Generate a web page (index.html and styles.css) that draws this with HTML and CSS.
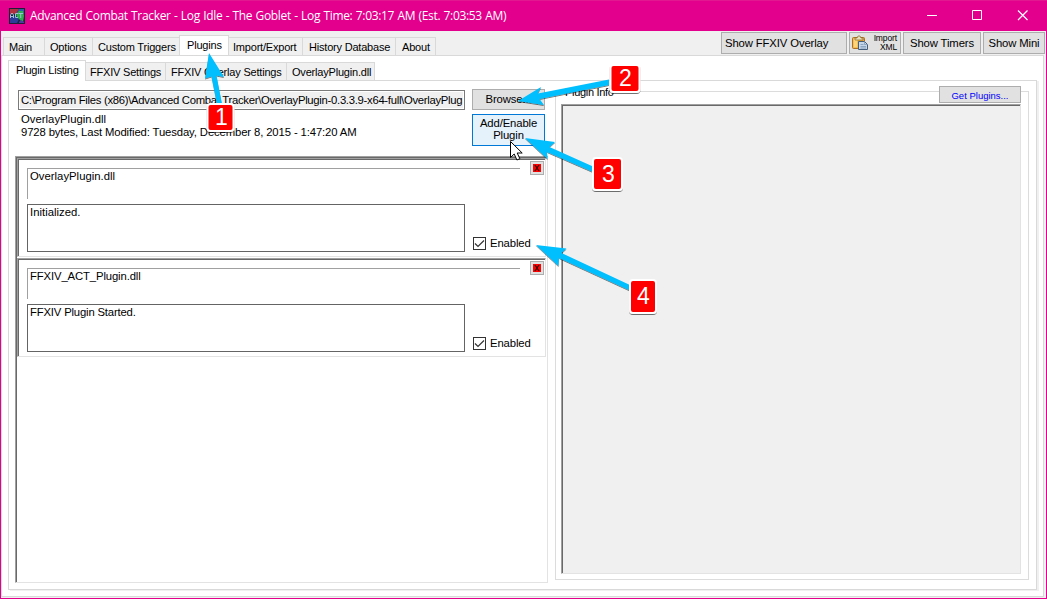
FILE: index.html
```html
<!DOCTYPE html>
<html lang="en">
<head>
<meta charset="utf-8">
<title>Advanced Combat Tracker</title>
<link rel="stylesheet" href="styles.css">
</head>
<body>
<div class="window">
  <header class="titlebar">
    <svg class="app-icon" width="16" height="16" viewBox="0 0 16 16">
      <rect width="16" height="16" fill="#17263f"/>
      <path d="M1 1h9L7 6H1z" fill="#b03040"/><path d="M10 1h5v5l-5 1-3-1z" fill="#2b5fa0"/>
      <path d="M1 9l6-1 3 3-2 4H1z" fill="#2c3c99"/><path d="M7 7l3-4h4l1 5-1 6-2-1-3-3z" fill="#2fae4c"/>
      <path d="M10 14l2-2 3 2v1h-5z" fill="#4a3da0"/>
      <path d="M1.500 10V7l1.500-2 1.500 2v3M2 8.500h2.500M9 5.500H6.500v4H9M9.500 5.500H14M11.700 5.500v4.500" fill="none" stroke="#9cc0d5"/>
      <rect x=".5" y=".5" width="15" height="15" fill="none" stroke="#1b2038"/>
    </svg>
    <h1 class="title">Advanced Combat Tracker - Log Idle - The Goblet - Log Time: 7:03:17 AM (Est. 7:03:53 AM)</h1>
    <svg class="controls" width="104" height="12" viewBox="0 0 104 12" fill="none" stroke="#fff">
      <path d="M0 5.500h10M45.500 .5h9v9h-9z"/><path d="M91 .5l9.500 9.500M100.500 .5L91 10" stroke-width="1.200"/>
    </svg>
  </header>

  <div class="toolbar">
    <nav class="tabs main-tabs">
      <span class="tab t-main">Main</span><span class="tab t-options">Options</span><span class="tab t-triggers">Custom Triggers</span><span class="tab t-plugins active">Plugins</span><span class="tab t-import">Import/Export</span><span class="tab t-history">History Database</span><span class="tab t-about">About</span>
    </nav>
    <div class="actions">
      <button class="btn a-overlay">Show FFXIV Overlay</button>
      <button class="btn a-import">
        <svg width="17" height="16" viewBox="0 0 17 16">
          <rect x=".5" y="2.500" width="12" height="11" rx="1" fill="#e9a83d" stroke="#ad6f22"/>
          <path d="M1.500 3.500h4v9h-4z" fill="#ffd57b"/><path d="M3 3h2l1-2h2l1 2h2v2H3z" fill="#e8dfbd" stroke="#876428" stroke-width=".7"/>
          <path d="M6.500 6.500h6l3 3v5h-9z" fill="#c4d6e8" stroke="#455f7a"/><path d="M12.500 6.500v3h3M8.500 9.500h3M8.500 11.500h5.500M8.500 13h5.500" fill="none" stroke="#7d98b5" stroke-width=".8"/>
        </svg><span class="import-label">Import<br>XML</span>
      </button>
      <button class="btn a-timers">Show Timers</button>
      <button class="btn a-mini">Show Mini</button>
    </div>
  </div>

  <main class="page">
    <nav class="tabs sub-tabs">
      <span class="tab s-listing active">Plugin Listing</span><span class="tab s-settings">FFXIV Settings</span><span class="tab s-overlay">FFXIV Overlay Settings</span><span class="tab s-dll">OverlayPlugin.dll</span>
    </nav>
    <div class="subpage">
      <section class="left">
        <div class="picker">
          <div class="file">
            <div class="path"><span>C:\Program Files (x86)\Advanced Combat Tracker\OverlayPlugin-0.3.3.9-x64-full\OverlayPlug</span></div>
            <p class="info"><span class="file-name">OverlayPlugin.dll</span><br><span>9728 bytes, Last Modified: Tuesday, December 8, 2015 - 1:47:20 AM</span></p>
          </div>
          <div class="picker-buttons">
            <button class="btn browse">Browse...</button>
            <button class="btn add">Add/Enable<br>Plugin</button>
          </div>
        </div>
        <div class="list">
          <article class="plugin">
            <div class="plugin-head"><div class="plugin-name"><span class="file-name">OverlayPlugin.dll</span></div><button class="remove"><svg width="8" height="8" viewBox="0 0 8 8"><path d="M2 1l4 6M6 1L2 7" stroke="#300" stroke-width="1.300"/></svg></button></div>
            <div class="plugin-body"><div class="status"><span class="file-name">Initialized.</span></div>
              <label class="enabled"><svg width="13" height="13" viewBox="0 0 13 13" fill="none" stroke="#333"><rect x=".5" y=".5" width="12" height="12"/><path d="M2 6.500l3 3 6-6" stroke-width="1.200"/></svg><span>Enabled</span></label></div>
          </article>
          <article class="plugin">
            <div class="plugin-head"><div class="plugin-name"><span>FFXIV_ACT_Plugin.dll</span></div><button class="remove"><svg width="8" height="8" viewBox="0 0 8 8"><path d="M2 1l4 6M6 1L2 7" stroke="#300" stroke-width="1.300"/></svg></button></div>
            <div class="plugin-body"><div class="status"><span class="started">FFXIV Plugin Started.</span></div>
              <label class="enabled"><svg width="13" height="13" viewBox="0 0 13 13" fill="none" stroke="#333"><rect x=".5" y=".5" width="12" height="12"/><path d="M2 6.500l3 3 6-6" stroke-width="1.200"/></svg><span>Enabled</span></label></div>
          </article>
        </div>
      </section>
      <section class="group">
        <div class="group-head"><span class="legend">Plugin Info</span><span class="rule"></span><button class="btn get">Get Plugins...</button><span class="rule-end"></span></div>
        <div class="group-body"><div class="info-view"></div></div>
      </section>
    </div>
  </main>
</div>

<svg class="annotations" width="1047" height="599" viewBox="0 0 1047 599">
  <defs><filter id="shadow" x="-20%" y="-20%" width="140%" height="150%"><feDropShadow dx="0" dy="1" stdDeviation=".5" flood-color="#000" flood-opacity=".55"/></filter></defs>
  <path d="M510.500 141.500v16l3.700-3.500 2.700 6 3-1.300-2.700-5.700h5z" fill="#fff" stroke="#000"/>
  <g fill="#00bfff" filter="url(#shadow)">
    <path d="M209 53L224 77L216.500 75.500L222 104H217L211.500 76.500L205 78.500Z"/>
    <path d="M518 101L541 87L538 93.500L609 79.500V85L539.500 99L544 105Z"/>
    <path d="M525 138L555 142L549.500 147L593 166.500V172L547 152L547.500 159Z"/>
    <path d="M536 245L566.500 248.500L561.500 253L631 285.500V291L559 258L558.500 266Z"/>
  </g>
  <g fill="#f00" stroke="#fff" stroke-width="2" filter="url(#shadow)">
    <rect x="207.500" y="104" width="26" height="27" rx="3"/>
    <rect x="610.500" y="65" width="29" height="27" rx="3"/>
    <rect x="593" y="158" width="29" height="32" rx="3"/>
    <rect x="630" y="280" width="26" height="33" rx="3"/>
  </g>
  <g class="numbers" text-anchor="middle">
    <text x="221.500" y="125">1</text><text x="625.500" y="86">2</text><text x="608.500" y="182">3</text><text x="643.500" y="304">4</text>
  </g>
</svg>
</body>
</html>
```
FILE: styles.css
```css
* { box-sizing: border-box; }
body { margin: 0; width: 1047px; height: 599px; overflow: hidden; font: 11.3px/13px "Liberation Sans", Arial, sans-serif; letter-spacing: -.12px; color: #000; }
button { font: inherit; letter-spacing: inherit; color: inherit; padding: 0; margin: 0; white-space: nowrap; }
h1, p { margin: 0; }
span { white-space: nowrap; }
svg { display: block; flex: none; }

.window { width: 1047px; height: 599px; background: #f0f0f0; border: 1px solid #e3008c; border-top: 0; display: flex; flex-direction: column; }
.titlebar { height: 31px; flex: none; margin: 0 -1px; padding: 0 16px 0 9px; background: #e3008c; border-top: 1px solid #e21891; display: flex; align-items: center; }
.title { flex: 1; margin-left: 5px; font: 12px/16px "Open Sans", "Noto Sans", sans-serif; color: #fff; letter-spacing: -.32px; word-spacing: .5px; }

.toolbar { height: 24px; flex: none; display: flex; justify-content: space-between; }
.tabs { display: flex; align-items: flex-end; font-size: 11px; letter-spacing: -.2px; }
.main-tabs { padding-left: 2px; }
.tab { height: 18px; background: #f0f0f0; border: 1px solid #d9d9d9; border-width: 1px 1px 0 0; padding: 3px 0 0 5px; }
.tab:first-child { border-left-width: 1px; }
.tab.active { height: 21px; background: #fff; margin-bottom: -1px; border-left-width: 1px; margin-left: -1px; padding-left: 7px; }
.t-main { width: 42px; } .t-options { width: 48px; padding-left: 5px; } .t-triggers { width: 87px; }
.t-plugins { width: 50px; } .t-import { width: 74px; padding-left: 4px; }
.t-history { width: 93px; padding-left: 6px; } .t-about { width: 40px; padding-left: 6px; }

.btn { background: #e1e1e1; border: 1px solid #adadad; }
.actions { display: flex; gap: 2px; padding: 1px 1px 1px 0; }
.actions .btn { height: 22px; }
.actions .a-overlay { width: 126px; text-align: left; padding-left: 3px; }
.actions .a-import { width: 52px; display: flex; align-items: center; justify-content: space-between; padding: 0 3px 0 2px; }
.import-label { font-size: 8.500px; line-height: 9px; text-align: right; }
.a-timers { width: 78px; } .a-mini { width: 62px; }

.page { height: 542px; width: 1043px; background: #fff; border: 1px solid #d9d9d9; padding: 4px 4px 6px 6px; }
.sub-tabs { height: 20px; }
.sub-tabs .tab.active { margin-left: 0; }
.s-listing { width: 78px; } .s-settings { width: 80px; padding-left: 4px; }
.s-overlay { width: 121px; } .s-dll { width: 88px; }
.subpage { height: 510px; width: 1029px; border: 1px solid #d9d9d9; box-shadow: 2px 1px #f0f0f0; display: flex; gap: 7px; padding-left: 6px; }
.left { width: 533px; padding-top: 8px; }
.picker { height: 67px; display: flex; gap: 7px; padding-left: 3px; }
.file { width: 447px; padding-top: 1px; }
.file-name { letter-spacing: .02px; }
.path { height: 20px; border: 1px solid #7a7a7a; background: #f0f0f0; box-shadow: inset 0 0 0 1px #fff; padding: 3px 0 0 2px; letter-spacing: -.29px; }
.info { padding: 3px 0 0 3px; }
.browse, .add { display: block; width: 73px; }
.browse { height: 21px; }
.add { height: 32px; margin-top: 4px; padding-bottom: 2px; line-height: 12px; border-color: #0078d7; background: #e5f1fb; }
.list { height: 427px; border: 1px solid; border-color: #a0a0a0 #e3e3e3 #e3e3e3 #a0a0a0; box-shadow: inset 1px 1px #696969; padding: 1px; }
.plugin { width: 529px; height: 99px; margin-bottom: 1px; border: 1px solid; border-color: #a0a0a0 #e3e3e3 #e3e3e3 #a0a0a0; box-shadow: inset 1px 1px #696969; padding: 2px 1px 0 9px; }
.plugin-head { height: 43px; display: flex; gap: 10px; }
.plugin-name { width: 493px; height: 31px; margin-top: 7px; border: solid #a0a0a0; border-width: 1px 0 0 1px; padding: 1px 2px; }
.remove { width: 14px; height: 14px; border: 1px solid #adadad; background: #e1e1e1; padding: 2px; }
.remove svg { background: #f00; }
.plugin-body { display: flex; gap: 8px; }
.status { width: 438px; height: 48px; border: 1px solid #646464; padding: 1px 2px; }
.started { letter-spacing: -.17px; }
.enabled { display: flex; gap: 4px; padding-top: 33px; }

.group { width: 474px; padding-top: 5px; }
.group-head { height: 18px; display: flex; align-items: flex-start; }
.group-head::before { content: ""; width: 7px; height: 13px; margin-top: 5px; border: solid #dcdcdc; border-width: 1px 0 0 1px; }
.legend { width: 51px; padding-left: 2px; font-size: 11px; letter-spacing: -.3px; }
.rule { flex: 1; border-top: 1px solid #dcdcdc; margin-top: 5px; }
.get { width: 82px; height: 17px; padding-top: 1px; font-size: 9.500px; line-height: 15px; color: #00f; letter-spacing: 0; }
.rule-end { width: 8px; height: 13px; margin-top: 5px; border: solid #dcdcdc; border-width: 1px 1px 0 0; }
.group-body { height: 476px; border: 1px solid #dcdcdc; border-top: 0; padding: 0 7px 5px 5px; }
.info-view { height: 470px; background: #f0f0f0; border: 1px solid; border-color: #a0a0a0 #e3e3e3 #e3e3e3 #a0a0a0; box-shadow: inset 1px 1px #696969; }

/* Callouts drawn over the window */
.annotations { position: absolute; left: 0; top: 0; pointer-events: none; }
.numbers { font: 23px "Liberation Sans", Arial, sans-serif; fill: #fff; letter-spacing: 0; }
```
